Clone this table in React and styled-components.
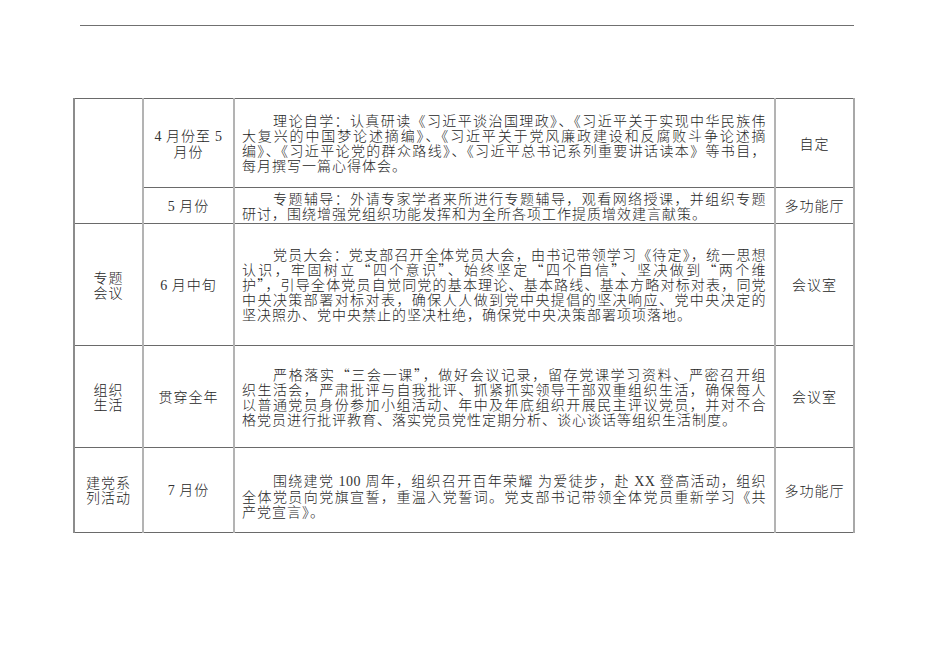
import React from 'react';
import styled, { createGlobalStyle } from 'styled-components';

const GlobalStyle = createGlobalStyle`
  html, body {
    margin: 0;
    padding: 0;
    background: #fff;
  }
  body {
    font-family: "Noto Sans CJK SC", "Liberation Serif", serif;
    color: #262626;
  }
`;

const rows = [
  {
    height: 89,
    group: { text: [''], span: 2 },
    time: ['4 月份至 5', '月份'],
    lines: [
      '理论自学：认真研读《习近平谈治国理政》、《习近平关于实现中华民族伟',
      '大复兴的中国梦论述摘编》、《习近平关于党风廉政建设和反腐败斗争论述摘',
      '编》、《习近平论党的群众路线》、《习近平总书记系列重要讲话读本》等书目，',
      '每月撰写一篇心得体会。',
    ],
    place: '自定',
  },
  {
    height: 36,
    time: ['5 月份'],
    lines: [
      '专题辅导：外请专家学者来所进行专题辅导，观看网络授课，并组织专题',
      '研讨，围绕增强党组织功能发挥和为全所各项工作提质增效建言献策。',
    ],
    place: '多功能厅',
  },
  {
    height: 122,
    group: { text: ['专题', '会议'] },
    time: ['6 月中旬'],
    lines: [
      '党员大会：党支部召开全体党员大会，由书记带领学习《待定》，统一思想',
      '认识，牢固树立“四个意识”、始终坚定“四个自信”、坚决做到“两个维',
      '护”，引导全体党员自觉同党的基本理论、基本路线、基本方略对标对表，同党',
      '中央决策部署对标对表，确保人人做到党中央提倡的坚决响应、党中央决定的',
      '坚决照办、党中央禁止的坚决杜绝，确保党中央决策部署项项落地。',
    ],
    place: '会议室',
  },
  {
    height: 102,
    group: { text: ['组织', '生活'] },
    time: ['贯穿全年'],
    lines: [
      '严格落实“三会一课”，做好会议记录，留存党课学习资料、严密召开组',
      '织生活会，严肃批评与自我批评、抓紧抓实领导干部双重组织生活，确保每人',
      '以普通党员身份参加小组活动、年中及年底组织开展民主评议党员，并对不合',
      '格党员进行批评教育、落实党员党性定期分析、谈心谈话等组织生活制度。',
    ],
    place: '会议室',
  },
  {
    height: 85,
    offset: 12,
    group: { text: ['建党系', '列活动'] },
    time: ['7 月份'],
    lines: [
      '围绕建党 100 周年，组织召开百年荣耀 为爱徒步，赴 XX 登高活动，组织',
      '全体党员向党旗宣誓，重温入党誓词。党支部书记带领全体党员重新学习《共',
      '产党宣言》。',
    ],
    place: '多功能厅',
  },
];

// digits and latin letters are set in a serif face, like the document
const withNums = (str) =>
  str.split(/([0-9A-Za-z]+)/).map((part, i) =>
    /^[0-9A-Za-z]+$/.test(part) ? <Num key={i}>{part}</Num> : part
  );

const App = () => {
  return (
    <>
      <GlobalStyle />
      <Page>
        <HeaderRule />
        <Sheet>
          <colgroup>
            <col style={{ width: '69px' }} />
            <col style={{ width: '91px' }} />
            <col style={{ width: '541px' }} />
            <col style={{ width: '79px' }} />
          </colgroup>
          <tbody>
            {rows.map((row, i) => (
              <Row key={`row_${i}`} $height={row.height}>
                {row.group && (
                  <Cell rowSpan={row.group.span || 1} $first>
                    {row.group.text.map((t, j) => (
                      <Short key={j}>{t}</Short>
                    ))}
                  </Cell>
                )}
                <Cell>
                  {row.time.map((t, j) => (
                    <Short key={j}>{withNums(t)}</Short>
                  ))}
                </Cell>
                <TextCell $offset={row.offset}>
                  {row.lines.map((line, j) => (
                    <Line
                      key={j}
                      $indent={j === 0}
                      $last={j === row.lines.length - 1}
                    >
                      {withNums(line)}
                    </Line>
                  ))}
                </TextCell>
                <Cell $last>
                  <Short>{row.place}</Short>
                </Cell>
              </Row>
            ))}
          </tbody>
        </Sheet>
      </Page>
    </>
  );
};

const Page = styled.div`
  width: 950px;
  height: 672px;
  padding-top: 25px;
  box-sizing: border-box;
  overflow: hidden;
`;

const HeaderRule = styled.div`
  margin-left: 80px;
  width: 774px;
  border-top: 1px solid #707070;
`;

const Sheet = styled.table`
  margin: 72px 0 0 73px;
  width: 780px;
  border-collapse: collapse;
  table-layout: fixed;
`;

const Row = styled.tr`
  height: ${(p) => p.$height}px;
`;

const Cell = styled.td`
  box-sizing: border-box;
  padding: 0;
  border-top: 1px solid #6a6a6a;
  border-bottom: 1px solid #6a6a6a;
  border-left: 2px solid ${(p) => (p.$first ? '#8c8c8c' : '#b3b3b3')};
  border-right: 2px solid ${(p) => (p.$last ? '#a8a8a8' : '#b3b3b3')};
  vertical-align: middle;
  text-align: center;
  font-size: 14px;
  line-height: 15px;
  font-weight: 300;
`;

const TextCell = styled(Cell)`
  text-align: left;
  padding: ${(p) => p.$offset || 0}px 8px 0 7px;
`;

const Short = styled.span`
  display: block;
  letter-spacing: 1px;
`;

const Line = styled.span`
  display: block;
  white-space: nowrap;
  text-align: justify;
  text-align-last: ${(p) => (p.$last ? 'left' : 'justify')};
  text-indent: ${(p) => (p.$indent ? '31px' : '0')};
  letter-spacing: ${(p) => (p.$last ? '1px' : '0.4px')};
`;

const Num = styled.span`
  font-family: "Liberation Serif", serif;
  font-size: 14px;
  font-weight: 400;
  color: #333;
  letter-spacing: 0.5px;
`;

export default App;
